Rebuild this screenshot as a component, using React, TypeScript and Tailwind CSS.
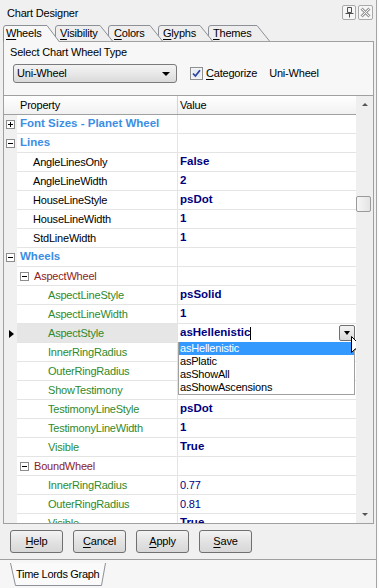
import React from 'react';

type Row = {
  kind: 'cat' | 'sub' | 'prop';
  level: number;
  name: string;
  value?: string;
  bold?: boolean;
  open?: boolean;
  selected?: boolean;
};

const rows: Row[] = [
  { kind: 'cat', level: 0, name: 'Font Sizes - Planet Wheel', open: false },
  { kind: 'cat', level: 0, name: 'Lines', open: true },
  { kind: 'prop', level: 1, name: 'AngleLinesOnly', value: 'False', bold: true },
  { kind: 'prop', level: 1, name: 'AngleLineWidth', value: '2', bold: true },
  { kind: 'prop', level: 1, name: 'HouseLineStyle', value: 'psDot', bold: true },
  { kind: 'prop', level: 1, name: 'HouseLineWidth', value: '1', bold: true },
  { kind: 'prop', level: 1, name: 'StdLineWidth', value: '1', bold: true },
  { kind: 'cat', level: 0, name: 'Wheels', open: true },
  { kind: 'sub', level: 1, name: 'AspectWheel', open: true },
  { kind: 'prop', level: 2, name: 'AspectLineStyle', value: 'psSolid', bold: true },
  { kind: 'prop', level: 2, name: 'AspectLineWidth', value: '1', bold: true },
  { kind: 'prop', level: 2, name: 'AspectStyle', value: 'asHellenistic', bold: true, selected: true },
  { kind: 'prop', level: 2, name: 'InnerRingRadius' },
  { kind: 'prop', level: 2, name: 'OuterRingRadius' },
  { kind: 'prop', level: 2, name: 'ShowTestimony' },
  { kind: 'prop', level: 2, name: 'TestimonyLineStyle', value: 'psDot', bold: true },
  { kind: 'prop', level: 2, name: 'TestimonyLineWidth', value: '1', bold: true },
  { kind: 'prop', level: 2, name: 'Visible', value: 'True', bold: true },
  { kind: 'sub', level: 1, name: 'BoundWheel', open: true },
  { kind: 'prop', level: 2, name: 'InnerRingRadius', value: '0.77' },
  { kind: 'prop', level: 2, name: 'OuterRingRadius', value: '0.81' },
  { kind: 'prop', level: 2, name: 'Visible', value: 'True', bold: true },
];

const tabs = [
  { u: 'W', rest: 'heels', w: 57, cls: 'w-[57px] pl-[3px] z-50', active: true },
  { u: 'V', rest: 'isibility', w: 58, cls: 'w-[58px] pl-[5px] z-40 -ml-[5px]' },
  { u: 'C', rest: 'olors', w: 55, cls: 'w-[55px] pl-[6px] z-30 -ml-[5px]' },
  { u: 'G', rest: 'lyphs', w: 55, cls: 'w-[55px] pl-[5px] z-20 -ml-[5px]' },
  { u: 'T', rest: 'hemes', w: 62, cls: 'w-[62px] pl-[5px] z-10 -ml-[5px]' },
];

const options = ['asHellenistic', 'asPlatic', 'asShowAll', 'asShowAscensions'];

function Expander({ open }: { open?: boolean }) {
  return (
    <span className="relative w-[9px] h-[9px] shrink-0 border border-[#8c8c8c] bg-white flex items-center justify-center">
      <span className="absolute w-[5px] h-px bg-black" />
      {!open && <span className="absolute w-px h-[5px] bg-black" />}
    </span>
  );
}

function Tab({ t }: { t: (typeof tabs)[number] }) {
  const h = t.active ? 17 : 16;
  return (
    <div className={`relative shrink-0 flex items-center ${t.cls} ${t.active ? 'h-[17px]' : 'h-[16px] mb-px'}`}>
      <svg className="absolute inset-0" width={t.w} height={h}>
        <path d={`M0.5,${h} V3 Q0.5,0.5 3,0.5 H${t.w - 13} L${t.w - 0.5},${h} Z`} fill={t.active ? '#f7f7f7' : '#eeeeee'} />
        <path d={`M0.5,${h} V3 Q0.5,0.5 3,0.5 H${t.w - 13} L${t.w - 0.5},${h}`} fill="none" stroke="#8d9097" />
      </svg>
      <span className="relative leading-none">
        <span className="underline underline-offset-2">{t.u}</span>
        {t.rest}
      </span>
    </div>
  );
}

function GridRow({ r }: { r: Row }) {
  const nameCls =
    r.kind === 'cat'
      ? 'font-bold text-[11.5px] tracking-normal text-[#3b8ee4] pl-[3px]'
      : r.kind === 'sub'
      ? 'text-[#8e1c1c] pl-[3px] gap-[5px]'
      : r.level === 1
      ? 'text-black pl-[16px]'
      : 'text-[#2f8a2c] pl-[31px]';
  return (
    <div className="flex h-[19px] shrink-0">
      <div className="w-[13px] shrink-0 flex items-center justify-center bg-[#f0f0f0]">
        {r.kind === 'cat' && <Expander open={r.open} />}
        {r.selected && (
          <span className="ml-[2px] w-0 h-0 border-y-[4.5px] border-y-transparent border-l-[5px] border-l-black" />
        )}
      </div>
      <div
        className={`w-[161px] shrink-0 flex items-center whitespace-nowrap overflow-hidden border-b border-r border-[#e4e4e4] ${nameCls} ${
          r.selected ? 'bg-[#e6e6e6]' : 'bg-white'
        }`}
      >
        {r.kind === 'sub' && <Expander open={r.open} />}
        <span>{r.name}</span>
      </div>
      <div className="relative flex-1 flex items-center pl-[2px] border-b border-[#e4e4e4] bg-white text-[#000080] whitespace-nowrap">
        {r.value && (
          <span className={r.bold ? 'font-bold text-[11.5px] tracking-normal' : ''}>{r.value}</span>
        )}
        {r.selected && (
          <>
            <span className="w-px h-[13px] bg-black" />
            <div className="ml-auto mr-px relative w-[16px] h-[16px] border border-[#707070] rounded-[2px] bg-[linear-gradient(#f4f4f4,#d9d9d9)] flex items-center justify-center">
              <span className="w-0 h-0 border-x-[3.5px] border-x-transparent border-t-[4px] border-t-black" />
              <svg className="absolute left-[11px] top-[10px] z-30" width="13" height="20">
                <path d="M0.5,0.5 L0.5,16.5 L4.5,12.7 L7.3,18.8 L9.6,17.8 L6.9,11.8 L11.8,11.8 Z" fill="white" stroke="black" strokeWidth="1" strokeLinejoin="round" />
              </svg>
            </div>
            <div className="absolute left-0 top-full w-[177px] z-20 bg-white border-x border-b border-[#a0a0a0] text-black font-normal">
              {options.map((o, i) => (
                <div
                  key={o}
                  className={`h-[13px] leading-[13px] pl-[1px] ${i === 0 ? 'bg-[#3399ff] text-white' : ''}`}
                >
                  {o}
                </div>
              ))}
            </div>
          </>
        )}
      </div>
    </div>
  );
}

function Button({ u, rest }: { u: string; rest: string }) {
  return (
    <button className="w-[53px] h-[23px] border border-[#707070] rounded-[3px] bg-[linear-gradient(#f3f3f3,#e3e3e3_50%,#d7d7d7)] flex items-center justify-center">
      <span>
        <span className="underline underline-offset-2">{u}</span>
        {rest}
      </span>
    </button>
  );
}

export default function App() {
  return (
    <div className="w-[379px] h-[588px] bg-[#fbfbfb] overflow-hidden font-['Liberation_Sans',Arial,sans-serif] text-[11px] tracking-[-0.2px] text-black">
      <div className="w-[377px] h-full bg-[#f0f0f0] border-r border-[#a5a5a5] flex flex-col">
        {/* title */}
        <div className="h-[22px] shrink-0 flex items-start pl-[7px] pr-[3px]">
          <span className="flex-1 mt-[5px]">Chart Designer</span>
          <div className="mt-[5px] flex gap-[2px]">
            <div className="w-[14px] h-[15px] border border-[#a9a9a9] rounded-[2px] bg-[#f6f6f6] flex items-center justify-center">
              <svg width="9" height="11">
                <path d="M2.5,0.5 H6.5 V5.5 H2.5 Z M0.5,6.5 H8.5 M4.5,6.5 V10.5" fill="none" stroke="#505050" />
              </svg>
            </div>
            <div className="w-[15px] h-[15px] border border-[#a9a9a9] rounded-[2px] bg-[#f6f6f6] flex items-center justify-center">
              <svg width="11" height="11">
                <path d="M1.5,1.5 L9.5,9.5 M9.5,1.5 L1.5,9.5" stroke="#9a9a9a" strokeWidth="3" />
                <path d="M1.5,1.5 L9.5,9.5 M9.5,1.5 L1.5,9.5" stroke="#f6f6f6" strokeWidth="1" />
              </svg>
            </div>
          </div>
        </div>

        {/* tabs */}
        <div className="relative z-10 h-[20px] -mb-px shrink-0 flex items-end pl-[3px]">
          {tabs.map((t) => (
            <Tab key={t.u} t={t} />
          ))}
        </div>

        {/* tab page */}
        <div className="ml-[3px] w-[371px] h-[483px] shrink-0 border border-[#a0a0a0] bg-[#f7f7f7] flex flex-col">
          <div className="h-[54px] shrink-0 border-b border-[#a0a0a0] pt-[3px] pl-[6px]">
            <div className="leading-[14px]">Select Chart Wheel Type</div>
            <div className="mt-[5px] flex items-center">
              <div className="ml-[3px] w-[164px] h-[19px] border border-[#7a7a7a] rounded-[3px] bg-[linear-gradient(#f3f3f3,#e8e8e8_50%,#dadada)] flex items-center pl-[3px] pr-[6px]">
                <span className="flex-1">Uni-Wheel</span>
                <span className="w-0 h-0 border-x-[4px] border-x-transparent border-t-[4px] border-t-black" />
              </div>
              <svg className="ml-[13px]" width="13" height="13">
                <rect x="0.5" y="0.5" width="12" height="12" fill="#f4f4f4" stroke="#8e8f8f" />
                <rect x="2.5" y="2.5" width="8" height="8" fill="#e6ecf3" />
                <path d="M3,6.5 L5.4,9 L10,3.2" fill="none" stroke="#2a46a0" strokeWidth="1.8" />
              </svg>
              <span className="ml-[3px]">
                <span className="underline underline-offset-2">C</span>ategorize
              </span>
              <span className="ml-[12px]">Uni-Wheel</span>
            </div>
          </div>

          <div className="flex-1 flex min-h-0">
            <div className="flex-1 flex flex-col overflow-hidden bg-white">
              <div className="flex h-[19px] shrink-0 border-b border-[#a0a0a0] bg-[linear-gradient(#ffffff,#f1f1f1)]">
                <div className="w-[13px] shrink-0" />
                <div className="w-[161px] shrink-0 flex items-center pl-[3px] border-r border-[#d5d5d5]">Property</div>
                <div className="flex-1 flex items-center pl-[2px]">Value</div>
              </div>
              {rows.map((r, i) => (
                <GridRow key={i} r={r} />
              ))}
            </div>
            <div className="w-[17px] shrink-0 bg-[#efefef] flex flex-col">
              <div className="h-[17px] flex items-center justify-center">
                <span className="w-0 h-0 border-x-[3px] border-x-transparent border-b-[3px] border-b-[#555]" />
              </div>
              <div className="h-[83px]" />
              <div className="w-[15px] h-[16px] border border-[#9a9a9a] rounded-[2px] bg-[linear-gradient(90deg,#f6f6f6,#e4e4e4)]" />
              <div className="flex-1" />
              <div className="h-[17px] flex items-center justify-center">
                <span className="w-0 h-0 border-x-[3px] border-x-transparent border-t-[3px] border-t-[#555]" />
              </div>
            </div>
          </div>
        </div>

        {/* buttons */}
        <div className="h-[35px] shrink-0 flex items-start pt-[6px] pl-[10px] gap-[10px]">
          <Button u="H" rest="elp" />
          <Button u="C" rest="ancel" />
          <Button u="A" rest="pply" />
          <Button u="S" rest="ave" />
        </div>

        {/* bottom tabs */}
        <div className="flex-1 border-t border-[#a0a0a0] bg-[#f6f6f6] pt-[3px] pl-[10px]">
          <div className="relative w-[96px] h-[23px] flex items-center pl-[6px]">
            <svg className="absolute inset-0" width="96" height="23">
              <path d="M0.5,0 L5.5,22.5 H91.5 L95.5,0" fill="#fafafa" stroke="#8d9097" />
            </svg>
            <span className="relative tracking-[-0.3px] whitespace-nowrap">Time Lords Graph</span>
          </div>
        </div>
      </div>
    </div>
  );
}
